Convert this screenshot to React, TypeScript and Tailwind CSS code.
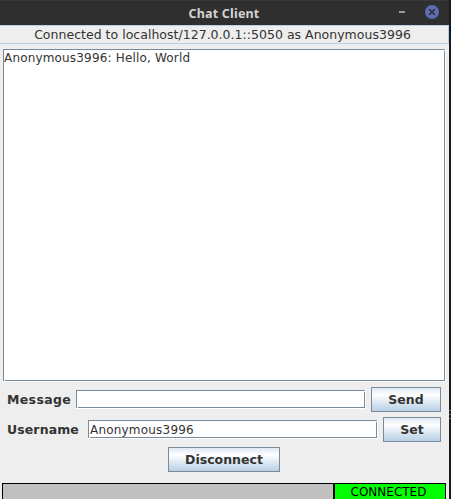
import type { ReactNode } from 'react';

const sans = "font-['DejaVu_Sans','Liberation_Sans',sans-serif]";

function MetalButton({ children, className }: { children: ReactNode; className: string }) {
  return (
    <button
      className={`flex h-[25px] shrink-0 items-center justify-center border border-[#7a8a99] bg-linear-to-b from-[#dde8f3] via-white via-30% to-[#b8cfe5] pt-[2px] text-[12.5px] font-bold leading-none ${className}`}
    >
      {children}
    </button>
  );
}

function Notches() {
  return (
    <>
      <span className="absolute top-px right-0 size-px bg-white" />
      <span className="absolute bottom-0 left-px size-px bg-white" />
    </>
  );
}

function Field({ value, className }: { value?: string; className: string }) {
  return (
    <div className={`relative h-[19px] shrink-0 border-r border-b border-white ${className}`}>
      <div className="flex h-full items-center overflow-hidden border border-[#7a8a99] bg-white pt-px pl-px text-[12px] leading-none tracking-[0.2px] whitespace-nowrap">
        {value}
      </div>
      <Notches />
    </div>
  );
}

export default function App() {
  return (
    <div className={`flex h-[499px] w-[451px] overflow-hidden bg-[#161b20] text-[#333333] ${sans}`}>
      <div className="flex w-[449px] shrink-0 flex-col bg-[#eeeeee]">
        <header className="grid h-[25px] shrink-0 grid-cols-[1fr_auto_1fr] items-center border-t border-[#383838] bg-[#2f2f2f] text-[#d3d3d3]">
          <span />
          <h1 className="mr-px pt-[2px] font-['Noto_Sans',sans-serif] text-[12.5px] font-bold leading-none tracking-[0.2px]">
            Chat Client
          </h1>
          <div className="flex items-center justify-end gap-5 pr-[10px] pb-[2px]">
            <span className="h-[2px] w-[6px] bg-[#999999]" />
            <svg width="14" height="14" viewBox="0 0 14 14">
              <circle cx="7" cy="7" r="7" fill="#5b6db5" />
              <path d="M4.2 4.2l5.6 5.6M9.8 4.2l-5.6 5.6" stroke="#2f2f2f" strokeWidth="1.6" />
            </svg>
          </div>
        </header>

        <div className="flex h-[19px] shrink-0 items-center justify-center border-y border-r border-[#b8cfe5] pt-[2px] pr-[3px] text-[12.5px] leading-none tracking-[0.02px] whitespace-nowrap">
          Connected to localhost/127.0.0.1::5050 as Anonymous3996
        </div>

        <div className="relative mt-[5px] ml-[3px] h-[333px] w-[443px] shrink-0 border-r border-b border-white">
          <div className="h-full border border-[#7a8a99] bg-white pt-px text-[12px] leading-[14px] tracking-[0.17px] whitespace-nowrap">
            Anonymous3996: Hello, World
          </div>
          <Notches />
        </div>

        <div className="mt-[5px] flex h-[25px] shrink-0 items-center">
          <span className="w-[76px] pt-[2px] pl-[7px] text-[12.5px] font-bold leading-none tracking-[0.35px]">Message</span>
          <Field className="w-[290px]" />
          <MetalButton className="ml-[5px] w-[70px]">Send</MetalButton>
        </div>
        <div className="mt-[5px] flex h-[25px] shrink-0 items-center">
          <span className="w-[88px] pt-[2px] pl-[7px] text-[12.5px] font-bold leading-none tracking-[0.1px]">Username</span>
          <Field className="w-[290px]" value="Anonymous3996" />
          <MetalButton className="ml-[5px] w-[58px]">Set</MetalButton>
        </div>
        <div className="mt-[5px] flex h-[25px] shrink-0 pl-[168px]">
          <MetalButton className="w-[112px]">Disconnect</MetalButton>
        </div>

        <footer className="mt-[11px] ml-[2px] flex h-[16px] w-[444px] shrink-0 text-[12px] leading-none text-black">
          <div className="w-[332px] border-x border-t border-black bg-[#c0c0c0]" />
          <div className="flex w-[112px] items-center justify-center border-x border-t border-black bg-[#00ff00] pr-[3px] pt-px">
            CONNECTED
          </div>
        </footer>
      </div>
      <div className="flex w-[2px] flex-col gap-[3px] pt-[410px]">
        <span className="h-px bg-[#62676c]" />
        <span className="h-px bg-[#71604f]" />
        <span className="h-px bg-[#62676c]" />
      </div>
    </div>
  );
}
